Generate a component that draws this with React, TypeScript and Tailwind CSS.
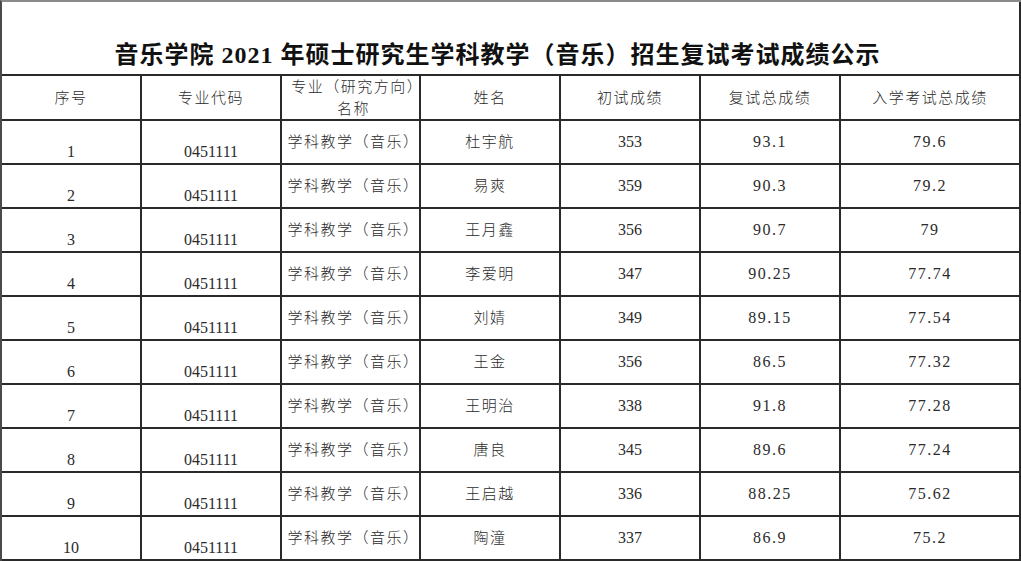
import React from "react";

const rows: [string, string, string, string, string][] = [
  ["1", "杜宇航", "353", "93.1", "79.6"],
  ["2", "易爽", "359", "90.3", "79.2"],
  ["3", "王月鑫", "356", "90.7", "79"],
  ["4", "李爱明", "347", "90.25", "77.74"],
  ["5", "刘婧", "349", "89.15", "77.54"],
  ["6", "王金", "356", "86.5", "77.32"],
  ["7", "王明治", "338", "91.8", "77.28"],
  ["8", "唐良", "345", "89.6", "77.24"],
  ["9", "王启越", "336", "88.25", "75.62"],
  ["10", "陶潼", "337", "86.9", "75.2"],
];

const cell = "border-r-2 border-b-2 border-[#2a2a2a] flex justify-center text-[#2b2b2b]";
const cjk = "text-[15px] tracking-[1.5px] font-light leading-[22px]";
const num = "text-[16px] leading-[20px]";

export default function App() {
  return (
    <div
      className="w-[1021px] h-[561px] bg-white overflow-hidden"
      style={{ fontFamily: '"Liberation Serif", "Noto Sans CJK SC", serif' }}
    >
      <div className="grid grid-cols-[140px_140px_139px_140px_140px_140px_180px] grid-rows-[74px_45px_repeat(10,44px)] border-t-2 border-l-2 border-t-[#8a8a8a] border-l-[#4a4a4a]">
        <div className={`col-span-7 ${cell} items-end pb-[3px] pr-[26px]`}>
          <span className="text-[24px] leading-[32px] tracking-[1px] font-bold text-[#111]">
            音乐学院 2021 年硕士研究生学科教学（音乐）招生复试考试成绩公示
          </span>
        </div>

        {["序号", "专业代码"].map((h) => (
          <div key={h} className={`${cell} items-center`}>
            <span className={cjk}>{h}</span>
          </div>
        ))}
        <div className={`${cell} items-center pl-[6px]`}>
          <span className={`${cjk} text-center`}>专业（研究方向）名称</span>
        </div>
        {["姓名", "初试成绩", "复试总成绩", "入学考试总成绩"].map((h) => (
          <div key={h} className={`${cell} items-center`}>
            <span className={cjk}>{h}</span>
          </div>
        ))}

        {rows.map((r) => (
          <React.Fragment key={r[0]}>
            <div className={`${cell} items-end pb-[1px]`}>
              <span className={num}>{r[0]}</span>
            </div>
            <div className={`${cell} items-end pb-[1px]`}>
              <span className={num}>0451111</span>
            </div>
            <div className={`${cell} items-center pl-[6px]`}>
              <span className={`${cjk} whitespace-nowrap`}>学科教学（音乐）</span>
            </div>
            <div className={`${cell} items-center`}>
              <span className={cjk}>{r[1]}</span>
            </div>
            <div className={`${cell} items-center`}>
              <span className={num}>{r[2]}</span>
            </div>
            <div className={`${cell} items-center`}>
              <span className={`${num} tracking-[1.5px]`}>{r[3]}</span>
            </div>
            <div className={`${cell} items-center`}>
              <span className={`${num} tracking-[1.5px]`}>{r[4]}</span>
            </div>
          </React.Fragment>
        ))}
      </div>
    </div>
  );
}
